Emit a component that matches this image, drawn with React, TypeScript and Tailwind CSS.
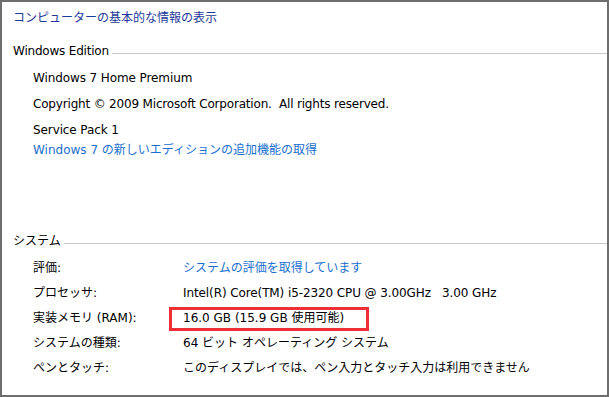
import React from "react";

const font = {
  fontFamily: '"DejaVu Sans", "Noto Sans CJK JP", sans-serif',
};

function Heading({ children, className }: { children: React.ReactNode; className: string }) {
  return (
    <div className={`flex h-[20px] items-center pl-[11px] ${className}`}>
      <span className="leading-[20px] text-black">{children}</span>
      <div className="ml-[3px] mt-[5px] h-px flex-1 bg-[#c8c8c8]" />
    </div>
  );
}

function Row({ label, children }: { label: string; children: React.ReactNode }) {
  return (
    <div className="flex h-[20px] items-center pl-[31px] leading-[20px]">
      <div className="w-[150px] shrink-0 text-black">{label}</div>
      <div className="whitespace-pre">{children}</div>
    </div>
  );
}

export default function App() {
  return (
    <div
      className="h-[397px] w-[609px] overflow-hidden border-2 border-[#6e6e6e] bg-white text-[12px]"
      style={font}
    >
      <div className="mt-[6px] h-[20px] pl-[11px] leading-[20px] text-[#1e3a9a]">
        コンピューターの基本的な情報の表示
      </div>

      <Heading className="mt-[13px]">
        <span className="tracking-[-0.2px]">Windows Edition</span>
      </Heading>

      <div className="pl-[31px] text-black">
        <div className="mt-[7px] h-[20px] leading-[20px] tracking-[-0.1px]">Windows 7 Home Premium</div>
        <div className="mt-[6px] h-[20px] whitespace-pre leading-[20px] tracking-[-0.18px]">
          Copyright © 2009 Microsoft Corporation.  All rights reserved.
        </div>
        <div className="mt-[6px] h-[20px] leading-[20px] tracking-[-0.1px]">Service Pack 1</div>
        <div className="h-[20px] leading-[20px] text-[#1a6fd0]">
          Windows 7 の新しいエディションの追加機能の取得
        </div>
      </div>

      <Heading className="mt-[71px]">システム</Heading>

      <div className="mt-[7px] flex flex-col gap-[5px]">
        <Row label="評価:">
          <span className="text-[#1a6fd0]">システムの評価を取得しています</span>
        </Row>
        <Row label="プロセッサ:">
          <span className="text-black tracking-[-0.1px]">Intel(R) Core(TM) i5-2320 CPU @ 3.00GHz   3.00 GHz</span>
        </Row>
        <Row label="実装メモリ (RAM):">
          <span className="relative text-black">
            16.0 GB (15.9 GB 使用可能)
            <span className="pointer-events-none absolute left-[-14px] top-[-4px] h-[24px] w-[200px] border-[3px] border-[#ee2f36]" />
          </span>
        </Row>
        <Row label="システムの種類:">
          <span className="text-black">64 ビット オペレーティング システム</span>
        </Row>
        <Row label="ペンとタッチ:">
          <span className="text-black">このディスプレイでは、ペン入力とタッチ入力は利用できません</span>
        </Row>
      </div>
    </div>
  );
}
